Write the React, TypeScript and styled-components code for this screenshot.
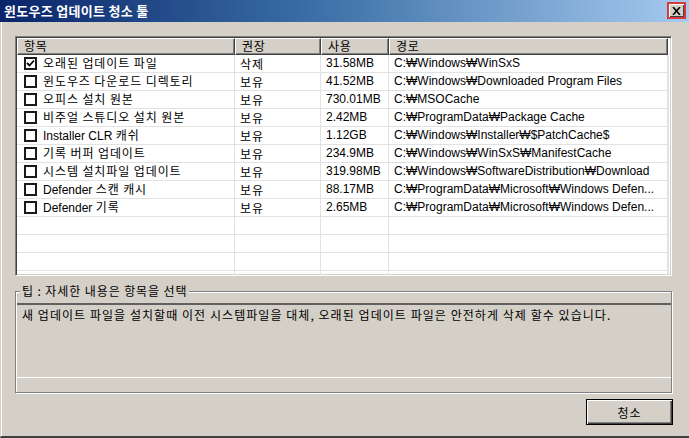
import styled, { createGlobalStyle } from "styled-components";
import type { ReactNode } from "react";

const GlobalStyle = createGlobalStyle`
  html, body {
    margin: 0;
    padding: 0;
    background: #d4d0c8;
  }
  * {
    box-sizing: border-box;
  }
`;

type Item = {
  name: string;
  advice: string;
  size: string;
  path: string;
  checked?: boolean;
};

const items: Item[] = [
  { name: "오래된 업데이트 파일", advice: "삭제", size: "31.58MB", path: "C:₩Windows₩WinSxS", checked: true },
  { name: "윈도우즈 다운로드 디렉토리", advice: "보유", size: "41.52MB", path: "C:₩Windows₩Downloaded Program Files" },
  { name: "오피스 설치 원본", advice: "보유", size: "730.01MB", path: "C:₩MSOCache" },
  { name: "비주얼 스튜디오 설치 원본", advice: "보유", size: "2.42MB", path: "C:₩ProgramData₩Package Cache" },
  { name: "Installer CLR 캐쉬", advice: "보유", size: "1.12GB", path: "C:₩Windows₩Installer₩$PatchCache$" },
  { name: "기록 버퍼 업데이트", advice: "보유", size: "234.9MB", path: "C:₩Windows₩WinSxS₩ManifestCache" },
  { name: "시스템 설치파일 업데이트", advice: "보유", size: "319.98MB", path: "C:₩Windows₩SoftwareDistribution₩Download" },
  { name: "Defender 스캔 캐시", advice: "보유", size: "88.17MB", path: "C:₩ProgramData₩Microsoft₩Windows Defen..." },
  { name: "Defender 기록", advice: "보유", size: "2.65MB", path: "C:₩ProgramData₩Microsoft₩Windows Defen..." },
];

const columns = [
  { title: "항목", width: 218 },
  { title: "권장", width: 86 },
  { title: "사용", width: 68 },
  { title: "경로", width: 279 },
];

// hangul runs get the wider spacing of the old gulim font, latin stays as is
function korean(text: string): ReactNode[] {
  return text.split(/([가-힣][가-힣 ]*)/).map((part, i) =>
    /[가-힣]/.test(part) ? <Hangul key={i}>{part}</Hangul> : part
  );
}

function App() {
  const blanks = [0, 1, 2];
  return (
    <>
      <GlobalStyle />
      <Window>
        <TitleBar>
          <Title>윈도우즈 업데이트 청소 툴</Title>
          <CloseButton>
            <svg width="9" height="8" viewBox="0 0 9 8">
              <path d="M1 0 L8 8 M8 0 L1 8" stroke="#000" strokeWidth="1.6" />
            </svg>
          </CloseButton>
        </TitleBar>
        <Body>
          <ListView>
            <HeaderRow>
              {columns.map((c) => (
                <HeaderCell key={c.title} $width={c.width}>
                  {c.title}
                </HeaderCell>
              ))}
              <HeaderFiller />
            </HeaderRow>
            {items.map((it) => (
              <Row key={it.name}>
                <Cell $width={columns[0].width}>
                  <Check>
                    {it.checked && (
                      <svg width="9" height="9" viewBox="0 0 9 9">
                        <path d="M1 4 L3.5 6.5 L8 1.5" stroke="#000" strokeWidth="1.8" fill="none" />
                      </svg>
                    )}
                  </Check>
                  <span>{korean(it.name)}</span>
                </Cell>
                <Cell $width={columns[1].width}>{korean(it.advice)}</Cell>
                <Cell $width={columns[2].width}>{it.size}</Cell>
                <Cell $width={columns[3].width}>{it.path}</Cell>
                <Filler />
              </Row>
            ))}
            {blanks.map((b) => (
              <Row key={b}>
                {columns.map((c) => (
                  <Cell key={c.title} $width={c.width} />
                ))}
                <Filler />
              </Row>
            ))}
            <Row $last>
              {columns.map((c) => (
                <Cell key={c.title} $width={c.width} />
              ))}
              <Filler />
            </Row>
          </ListView>
          <GroupBox>
            <Legend>팁 : 자세한 내용은 항목을 선택</Legend>
            <TipText>
              새 업데이트 파일을 설치할때 이전 시스템파일을 대체, 오래된 업데이트 파일은 안전하게 삭제 할수 있습니다.
            </TipText>
          </GroupBox>
          <ButtonRow>
            <PushButton>청소</PushButton>
          </ButtonRow>
        </Body>
      </Window>
    </>
  );
}

const Window = styled.div`
  width: 689px;
  height: 438px;
  display: flex;
  flex-direction: column;
  background: #d4d0c8;
  border-left: 1px solid #d4d0c8;
  border-bottom: 2px solid #404040;
  box-shadow: inset 1px 0 0 #ffffff;
  font-family: "Liberation Sans", "Noto Sans CJK KR", sans-serif;
  font-size: 12px;
  color: #000;
`;

const TitleBar = styled.div`
  height: 22px;
  display: flex;
  align-items: center;
  justify-content: space-between;
  padding: 0 3px 1px 4px;
  background: linear-gradient(to right, #0a246a 0%, #3a6ea5 45%, #a6caf0 100%);
  margin-left: -1px;
`;

const Title = styled.div`
  color: #fff;
  font-family: "Noto Sans CJK KR", sans-serif;
  font-weight: 700;
  font-size: 13px;
  letter-spacing: 0.3px;
`;

const CloseButton = styled.div`
  width: 19px;
  height: 17px;
  display: flex;
  align-items: center;
  justify-content: center;
  background: #d4d0c8;
  border: 2px solid #d63a3a;
  box-shadow: inset 1px 1px 0 #fff, inset -1px -1px 0 #404040;
`;

const Body = styled.div`
  flex: 1;
  display: flex;
  flex-direction: column;
  padding: 14px 17px 0 14px;
`;

const ListView = styled.div`
  width: 657px;
  height: 240px;
  background: #fff;
  border-top: 1px solid #808080;
  border-left: 1px solid #808080;
  border-right: 1px solid #ffffff;
  border-bottom: 1px solid #ffffff;
  box-shadow: inset 1px 1px 0 #404040, inset -1px -1px 0 #d4d0c8;
  padding: 1px 2px 1px 1px;
  overflow: hidden;
`;

const HeaderRow = styled.div`
  display: flex;
  height: 17px;
`;

const HeaderCell = styled.div<{ $width: number }>`
  width: ${(p) => p.$width}px;
  flex: none;
  background: #d4d0c8;
  border-top: 1px solid #fff;
  border-left: 1px solid #fff;
  border-right: 1px solid #404040;
  border-bottom: 1px solid #404040;
  box-shadow: inset -1px -1px 0 #808080;
  padding: 0 6px;
  line-height: 14px;
  font-family: "Noto Sans CJK KR", sans-serif;
  font-size: 12px;
  letter-spacing: 0.8px;
`;

const HeaderFiller = styled.div`
  flex: 1;
  background: #fff;
`;

const Row = styled.div<{ $last?: boolean }>`
  display: flex;
  height: 18px;
  border-bottom: ${(p) => (p.$last ? "none" : "1px solid #e2e2e2")};
`;

const Cell = styled.div<{ $width: number }>`
  width: ${(p) => p.$width}px;
  flex: none;
  display: flex;
  align-items: center;
  gap: 6px;
  padding: 0 4px 0 5px;
  border-right: 1px solid #e2e2e2;
  white-space: nowrap;
  overflow: hidden;
  font-size: 12px;
  line-height: 17px;
`;

const Hangul = styled.span`
  font-family: "Noto Sans CJK KR", sans-serif;
  letter-spacing: 0.9px;
`;

const Filler = styled.div`
  flex: 1;
  border-right: 1px solid #e2e2e2;
`;

const Check = styled.span`
  width: 13px;
  height: 13px;
  flex: none;
  display: flex;
  align-items: center;
  justify-content: center;
  border: 2px solid #1a1a1a;
  background: #fff;
  margin-left: 2px;
`;

const GroupBox = styled.div`
  position: relative;
  margin-top: 15px;
  width: 657px;
  height: 102px;
  border: 1px solid #808080;
  box-shadow: inset 1px 1px 0 #fff, 1px 1px 0 #fff;
  padding: 11px 0 14px 1px;
  display: flex;
`;

const Legend = styled.span`
  position: absolute;
  top: -9px;
  left: 4px;
  padding: 0 2px;
  background: #d4d0c8;
  font-family: "Noto Sans CJK KR", sans-serif;
  font-size: 12px;
  line-height: 16px;
  letter-spacing: 0.9px;
`;

const TipText = styled.div`
  flex: 1;
  border-top: 2px solid #606060;
  border-bottom: 1px solid #fff;
  padding: 2px 5px;
  font-family: "Noto Sans CJK KR", sans-serif;
  font-size: 12px;
  line-height: 16px;
  letter-spacing: 1.05px;
`;

const ButtonRow = styled.div`
  display: flex;
  justify-content: flex-end;
  padding: 6px 0 0;
  width: 658px;
`;

const PushButton = styled.button`
  width: 87px;
  height: 26px;
  background: #d4d0c8;
  border: 1px solid #000;
  box-shadow: inset 1px 1px 0 #fff, inset -1px -1px 0 #404040, inset -2px -2px 0 #808080;
  font-family: "Noto Sans CJK KR", sans-serif;
  font-size: 12px;
  letter-spacing: 1px;
  color: #000;
  padding: 0;
`;

export default App;
